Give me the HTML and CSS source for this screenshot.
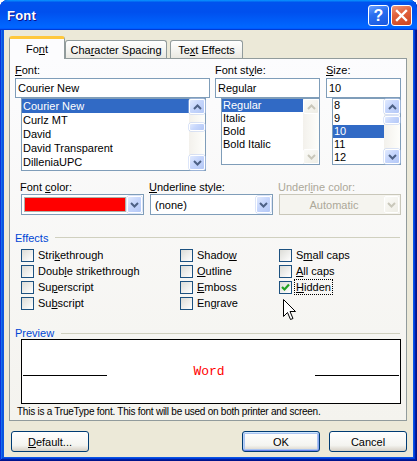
FILE: index.html
```html
<!DOCTYPE html>
<html>
<head>
<meta charset="utf-8">
<link rel="stylesheet" href="styles.css">
</head>
<body>
<div class="window">
  <div class="titlebar">
    <span class="title">Font</span>
    <div class="caption-btns">
      <span class="cbtn help">?</span>
      <span class="cbtn close"><svg width="13" height="13" viewBox="0 0 13 13"><path d="M2 2 L11 11 M11 2 L2 11" stroke="#fff" stroke-width="2.4" stroke-linecap="square"/></svg></span>
    </div>
  </div>
  <div class="client">
    <div class="tabs">
      <div class="tab active">Fo<u>n</u>t</div>
      <div class="tab tab2">Cha<u>r</u>acter Spacing</div>
      <div class="tab tab3">Te<u>x</u>t Effects</div>
    </div>
    <div class="panel">
      <div class="pickers">
        <div class="picker">
          <div class="lbl"><u>F</u>ont:</div>
          <div class="input">Courier New</div>
          <div class="list list-font">
            <div class="items">
              <div class="item sel">Courier New</div>
              <div class="item">Curlz MT</div>
              <div class="item">David</div>
              <div class="item">David Transparent</div>
              <div class="item">DilleniaUPC</div>
            </div>
            <div class="sbar">
              <div class="sbtn"><svg width="9" height="6" viewBox="0 0 9 6"><path d="M1 5 L4.5 1.5 L8 5" fill="none" stroke="#4D6185" stroke-width="2"/></svg></div>
              <div class="track"><div class="thumb thumb-font"></div></div>
              <div class="sbtn"><svg width="9" height="6" viewBox="0 0 9 6"><path d="M1 1 L4.5 4.5 L8 1" fill="none" stroke="#4D6185" stroke-width="2"/></svg></div>
            </div>
          </div>
        </div>
        <div class="picker">
          <div class="lbl">Font st<u>y</u>le:</div>
          <div class="input">Regular</div>
          <div class="list list-small">
            <div class="items">
              <div class="item sel">Regular</div>
              <div class="item">Italic</div>
              <div class="item">Bold</div>
              <div class="item">Bold Italic</div>
            </div>
            <div class="sbar">
              <div class="sbtn disabled"><svg width="9" height="6" viewBox="0 0 9 6"><path d="M1 5 L4.5 1.5 L8 5" fill="none" stroke="#C9C7BA" stroke-width="2"/></svg></div>
              <div class="track"></div>
              <div class="sbtn disabled"><svg width="9" height="6" viewBox="0 0 9 6"><path d="M1 1 L4.5 4.5 L8 1" fill="none" stroke="#C9C7BA" stroke-width="2"/></svg></div>
            </div>
          </div>
        </div>
        <div class="picker picker-size">
          <div class="lbl"><u>S</u>ize:</div>
          <div class="input">10</div>
          <div class="list list-small">
            <div class="items">
              <div class="item">8</div>
              <div class="item">9</div>
              <div class="item sel">10</div>
              <div class="item">11</div>
              <div class="item">12</div>
            </div>
            <div class="sbar">
              <div class="sbtn"><svg width="9" height="6" viewBox="0 0 9 6"><path d="M1 5 L4.5 1.5 L8 5" fill="none" stroke="#4D6185" stroke-width="2"/></svg></div>
              <div class="track"><div class="thumb thumb-size"></div></div>
              <div class="sbtn"><svg width="9" height="6" viewBox="0 0 9 6"><path d="M1 1 L4.5 4.5 L8 1" fill="none" stroke="#4D6185" stroke-width="2"/></svg></div>
            </div>
          </div>
        </div>
      </div>

      <div class="combos">
        <div class="combo-col">
          <div class="lbl lbl-combo">Font <u>c</u>olor:</div>
          <div class="combo">
            <div class="swatch"></div>
            <div class="dd"><svg width="9" height="6" viewBox="0 0 9 6"><path d="M1 1 L4.5 4.5 L8 1" fill="none" stroke="#4D6185" stroke-width="2"/></svg></div>
          </div>
        </div>
        <div class="combo-col">
          <div class="lbl lbl-combo"><u>U</u>nderline style:</div>
          <div class="combo">
            <div class="val">(none)</div>
            <div class="dd"><svg width="9" height="6" viewBox="0 0 9 6"><path d="M1 1 L4.5 4.5 L8 1" fill="none" stroke="#4D6185" stroke-width="2"/></svg></div>
          </div>
        </div>
        <div class="combo-col">
          <div class="lbl lbl-combo grey">Underl<u>i</u>ne color:</div>
          <div class="combo combo-dis">
            <div class="val center">Automatic</div>
            <div class="dd disabled"><svg width="9" height="6" viewBox="0 0 9 6"><path d="M1 1 L4.5 4.5 L8 1" fill="none" stroke="#C9C7BA" stroke-width="2"/></svg></div>
          </div>
        </div>
      </div>

      <div class="legend legend-effects"><span>Effects</span><i class="rule"></i></div>
      <div class="effects">
        <div class="chk"><span class="box"></span><span class="ctext">Stri<u>k</u>ethrough</span></div>
        <div class="chk"><span class="box"></span><span class="ctext">Shado<u>w</u></span></div>
        <div class="chk"><span class="box"></span><span class="ctext">S<u>m</u>all caps</span></div>
        <div class="chk"><span class="box"></span><span class="ctext">Doub<u>l</u>e strikethrough</span></div>
        <div class="chk"><span class="box"></span><span class="ctext"><u>O</u>utline</span></div>
        <div class="chk"><span class="box"></span><span class="ctext"><u>A</u>ll caps</span></div>
        <div class="chk"><span class="box"></span><span class="ctext">Su<u>p</u>erscript</span></div>
        <div class="chk"><span class="box"></span><span class="ctext"><u>E</u>mboss</span></div>
        <div class="chk"><span class="box checked"><svg width="11" height="11" viewBox="0 0 11 11"><path d="M2 5 L4.5 7.5 L9 2.5" fill="none" stroke="#21A121" stroke-width="2.2"/></svg></span><span class="ctext focus"><u>H</u>idden</span></div>
        <div class="chk"><span class="box"></span><span class="ctext">Su<u>b</u>script</span></div>
        <div class="chk"><span class="box"></span><span class="ctext">En<u>g</u>rave</span></div>
        <div class="chk"></div>
      </div>

      <div class="legend legend-preview"><span>Preview</span><i class="rule"></i></div>
      <div class="preview">
        <i class="pline"></i>
        <span class="word">Word</span>
        <i class="pline"></i>
      </div>
      <div class="note">This is a TrueType font. This font will be used on both printer and screen.</div>
    </div>

    <div class="buttons">
      <div class="btn"><u>D</u>efault...</div>
      <div class="spacer"></div>
      <div class="btn default">OK</div>
      <div class="btn">Cancel</div>
    </div>
  </div>

  <svg class="cursor" width="14" height="23" viewBox="0 0 14 23"><path d="M0.5 0.5 V17.5 L4.5 13.5 L7.5 20.5 L10 19.5 L7 12.5 H12.5 Z" fill="#fff" stroke="#000" stroke-width="1"/></svg>
</div>
</body>
</html>
```

FILE: styles.css
```css
html, body {
  margin: 0;
  padding: 0;
  background: #ffffff;
}
body {
  font-family: "Liberation Sans", Arial, sans-serif;
  font-size: 11px;
  color: #000;
}
u { text-decoration: underline; text-underline-offset: 1px; }

.window {
  position: relative;
  width: 417px;
  height: 461px;
  box-sizing: border-box;
  padding: 0 4px 4px 4px;
  background: #0A55E3;
  border-radius: 8px 8px 0 0;
  box-shadow: inset -1px -1px #00138c, inset 1px 1px #0831d9, inset -2px -2px #001ea0, inset 2px 2px #166aee, inset -3px -3px #003bda, inset 3px 3px #0855dd;
  display: flex;
  flex-direction: column;
}

.titlebar {
  height: 30px;
  margin: 0 -4px;
  padding: 0 5px 0 7px;
  border-radius: 8px 8px 0 0;
  background: linear-gradient(180deg, #0997ff, #0053ee 8%, #0050ee 40%, #0066ff 88%, #0066ff 93%, #005bff 95%, #003dd7 96%, #003dd7);
  display: flex;
  align-items: center;
  justify-content: space-between;
}
.title {
  color: #fff;
  font-weight: bold;
  font-size: 13px;
  text-shadow: 1px 1px #0f1089;
  letter-spacing: 0.2px;
}
.caption-btns {
  display: flex;
  gap: 2px;
  margin-top: 1px;
}
.cbtn {
  width: 21px;
  height: 21px;
  box-sizing: border-box;
  border: 1px solid #fff;
  border-radius: 3px;
  display: flex;
  align-items: center;
  justify-content: center;
  color: #fff;
  font-weight: bold;
  font-size: 16px;
}
.help {
  background: linear-gradient(160deg, #6aa0ff 0%, #2a6ff0 40%, #1757e0 100%);
}
.close {
  background: linear-gradient(160deg, #f09a7e 0%, #e2623d 40%, #cc4421 100%);
}

.client {
  flex: 1;
  background: #ECE9D8;
  padding: 6px 6px 0 5px;
  display: flex;
  flex-direction: column;
}

.tabs {
  display: flex;
  align-items: flex-end;
  height: 23px;
  margin-bottom: -1px;
  position: relative;
  z-index: 1;
}
.tab {
  height: 18px;
  margin-bottom: 1px;
  box-sizing: border-box;
  border: 1px solid #919B9C;
  border-bottom: none;
  border-radius: 3px 3px 0 0;
  background: linear-gradient(#ffffff, #f3f3ef 60%, #e9e8e1);
  display: flex;
  align-items: center;
  justify-content: center;
  padding-top: 1px;
}
.tab.active {
  width: 56px;
  height: 23px;
  margin-bottom: 0;
  background: #FCFCFE;
  border-top: 3px solid #FFC83C;
  padding-top: 0;
}
.tab2 { width: 102px; margin-left: 0; }
.tab3 { width: 73px; margin-left: 3px; }

.panel {
  height: 363px;
  box-sizing: border-box;
  border: 1px solid #919B9C;
  background: linear-gradient(#FCFCFE, #F4F3EE);
  padding: 5px 5px 0 5px;
}

.pickers {
  display: grid;
  grid-template-columns: 195px 105px 1fr;
  column-gap: 5px;
  height: 107px;
}
.picker-size { margin-left: 1px; }
.lbl {
  height: 14px;
  line-height: 13px;
}
.lbl-combo { height: 13px; }
.grey { color: #ACA899; }
.input {
  height: 20px;
  box-sizing: border-box;
  border: 1px solid #7F9DB9;
  background: #fff;
  line-height: 18px;
  padding-left: 2px;
}
.list {
  display: flex;
  box-sizing: border-box;
  border: 1px solid #7F9DB9;
  background: #fff;
  margin-left: 6px;
}
.list-font { width: 185px; height: 73px; }
.list-small { height: 67px; }
.items { flex: 1; overflow: hidden; }
.item {
  height: 13px;
  line-height: 13px;
  padding-left: 1px;
  white-space: nowrap;
}
.list-font .item { height: 14px; line-height: 14px; }
.item.sel { background: #316AC5; color: #fff; }

.sbar {
  width: 16px;
  display: flex;
  flex-direction: column;
  background: linear-gradient(90deg, #f3f1ec, #fefefb);
}
.sbtn, .thumb, .dd {
  box-sizing: border-box;
  border: 1px solid #fff;
  border-radius: 2px;
  background: linear-gradient(135deg, #e1eafe 0%, #c6d6fc 45%, #b4c8f6 100%);
  box-shadow: 0 0 0 0.5px #b9cbf3;
  display: flex;
  align-items: center;
  justify-content: center;
}
.sbtn { height: 15px; }
.sbtn.disabled, .dd.disabled {
  background: linear-gradient(135deg, #fbfbf8, #eeede5);
  box-shadow: none;
}
.track { flex: 1; }
.thumb-font { height: 8px; margin-top: 9px; }
.thumb-size { height: 8px; margin-top: 2px; }

.combos {
  display: grid;
  grid-template-columns: 123px 123px 1fr;
  column-gap: 6px;
  margin-left: 6px;
  margin-top: 10px;
}
.combo-col .lbl { margin-left: -1px; }
.combo {
  height: 21px;
  box-sizing: border-box;
  border: 1px solid #7F9DB9;
  background: #fff;
  display: flex;
  align-items: center;
  padding: 1px;
}
.combo .val { flex: 1; padding-left: 3px; }
.combo .val.center { text-align: center; color: #ACA899; }
.combo-dis { border-color: #C9C7BA; background: #F5F4EF; }
.swatch {
  width: 100px;
  height: 13px;
  margin-left: 2px;
  background: #FF0000;
  box-shadow: 0 0 0 1px #b0b0a8;
  margin-right: auto;
}
.dd { width: 15px; height: 17px; }

.legend {
  display: flex;
  align-items: center;
  height: 13px;
  color: #0046D5;
}
.legend .rule {
  flex: 1;
  height: 1px;
  background: #D0D0BF;
  margin-left: 7px;
  margin-right: 1px;
}
.legend-effects { margin-top: 16px; }
.legend-preview { margin-top: 16px; height: 12px; }

.effects {
  display: grid;
  grid-template-columns: 159px 99px 1fr;
  grid-auto-rows: 16px;
  margin: 3px 0 0 6px;
}
.chk {
  display: flex;
  align-items: center;
}
.box {
  width: 13px;
  height: 13px;
  box-sizing: border-box;
  border: 1px solid #1C5180;
  background: linear-gradient(135deg, #dcdcd7, #ffffff);
  display: flex;
  align-items: center;
  justify-content: center;
}
.ctext {
  margin-left: 2px;
  border: 1px dotted transparent;
  padding: 0 1px;
  line-height: 14px;
}
.ctext.focus { border-color: #000; }

.preview {
  margin: 0 0 0 6px;
  width: 380px;
  height: 65px;
  box-sizing: border-box;
  border: 1px solid #000;
  background: #fff;
  display: flex;
  align-items: center;
  padding: 0 1px 0 1px;
}
.pline {
  width: 84px;
  height: 1px;
  background: #000;
  margin-top: 8px;
}
.word {
  flex: 1;
  text-align: center;
  color: #FF0000;
  font-family: "Liberation Mono", "Courier New", monospace;
  font-size: 13px;
  margin-right: 4px;
}
.note {
  margin: 1px 0 0 2px;
  line-height: 13px;
  font-size: 10px;
  letter-spacing: -0.25px;
  white-space: nowrap;
}

.buttons {
  display: flex;
  margin-top: 10px;
  padding-left: 2px;
  gap: 9px;
}
.spacer { flex: 1; }
.btn {
  width: 78px;
  height: 21px;
  box-sizing: border-box;
  border: 1px solid #003C74;
  border-radius: 3px;
  background: linear-gradient(#ffffff, #f4f4f0 70%, #d6d0c5);
  display: flex;
  align-items: center;
  justify-content: center;
}
.btn.default {
  box-shadow: inset 0 1px #cee7ff, inset 0 -1px #6982ee, inset 1px 0 #b6d0f7, inset -1px 0 #8ca8f0, inset 0 0 0 2px #a9c3f1;
}

.cursor {
  position: absolute;
  left: 283px;
  top: 299px;
}
```
